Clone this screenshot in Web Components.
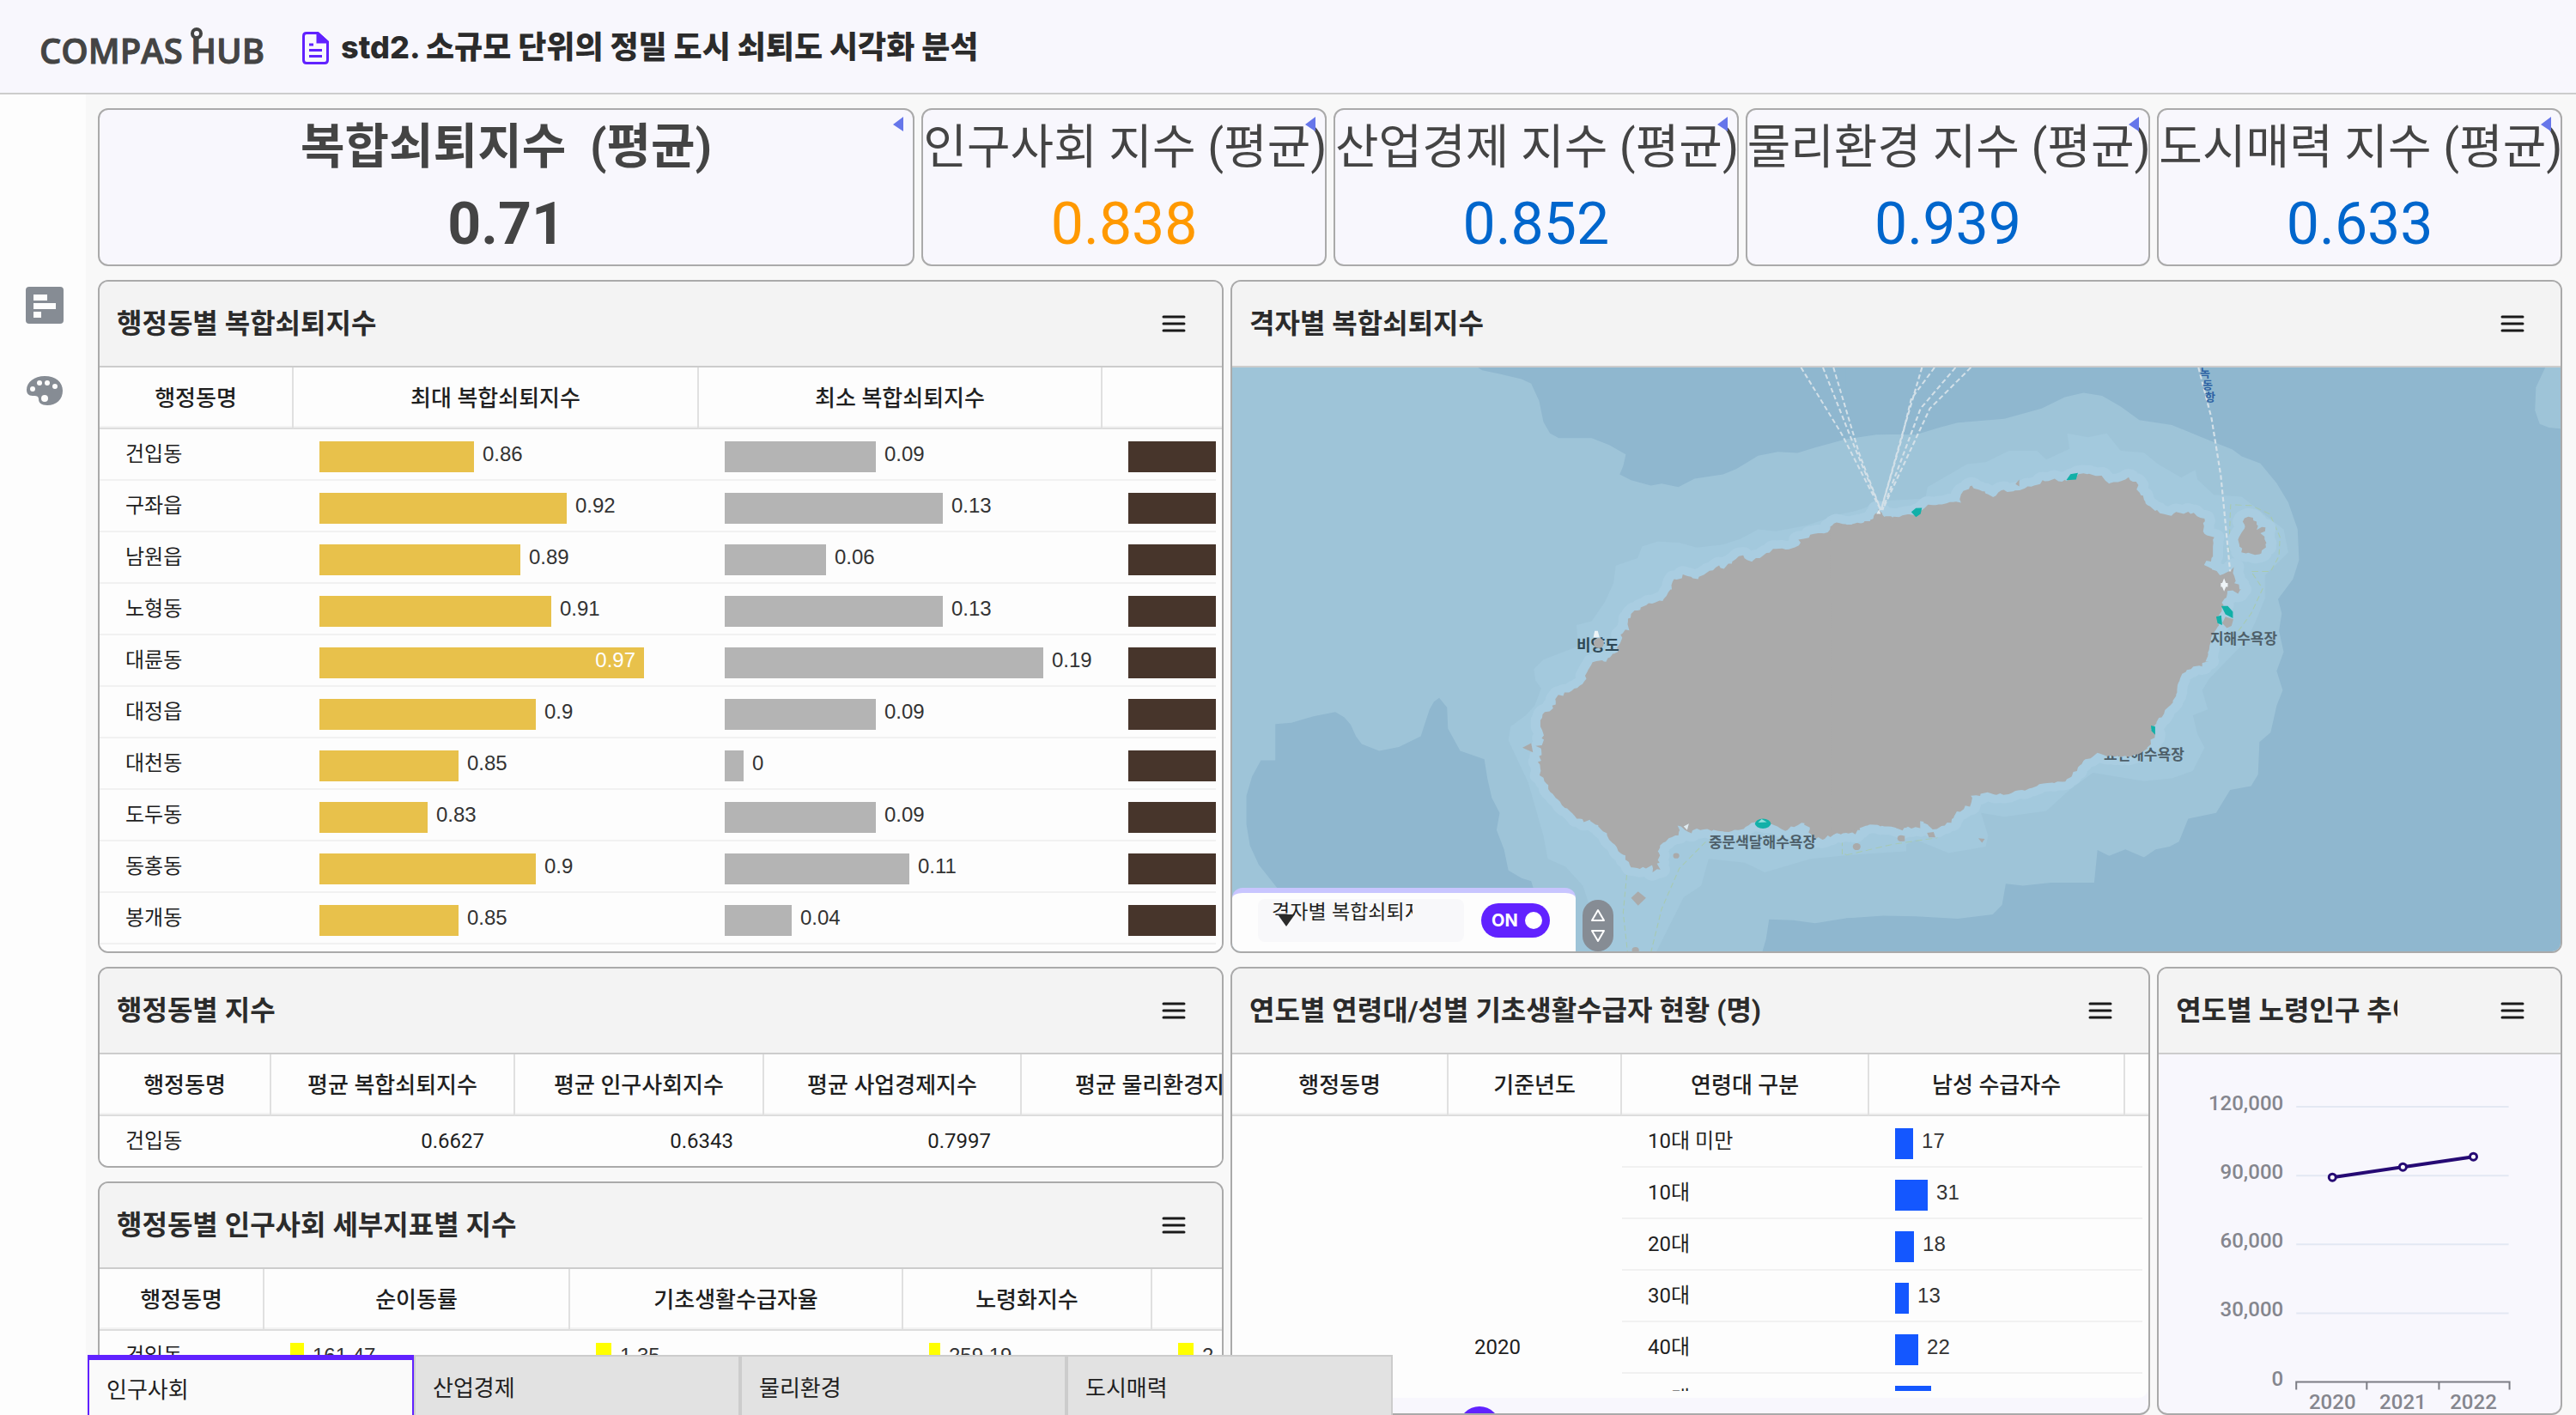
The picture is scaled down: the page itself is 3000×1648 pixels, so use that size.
<!DOCTYPE html>
<html lang="ko">
<head>
<meta charset="utf-8">
<title>COMPAS HUB</title>
<style>
  html, body {
    margin: 0;
    height: 100%;
    overflow: hidden;
  }
  body {
    font-family: Roboto, "Noto Sans CJK KR", sans-serif;
    font-size: 24px;
    color: #1f1f1f;
    background: #f8f8f8;
  }
</style>
</head>
<body>
<hub-app></hub-app>

<template id="tpl-app">
  <style>
    :host { display: flex; flex-direction: column; height: 100vh; }
    .body { flex: 1; min-height: 0; display: flex; }
    main {
      flex: 1;
      min-width: 0;
      display: grid;
      grid-template-columns: repeat(24, minmax(0, 1fr));
      grid-template-rows: auto auto minmax(0, 1fr);
      gap: 16px 8px;
      padding: 16px 16px 0 14px;
      overflow: hidden;
    }
    .w4 { grid-column: span 4; }
    .w8 { grid-column: span 8; }
    .w9 { grid-column: span 9; }
    .w11 { grid-column: span 11; }
    .w13 { grid-column: span 13; }
    .stack { display: flex; flex-direction: column; gap: 16px; min-height: 0; }
    .stack .grow { flex: 1; min-height: 0; }
    .pad { padding-bottom: 8px; background: #fdfdfd; }
    #welfare { height: 400px; border-bottom: 8px solid #fdfdfd; border-radius: 0 0 12px 12px; }
    .pager { padding: 10px 0 0 264px; }
    .pager button {
      width: 48px; height: 48px; border: 0; border-radius: 50%;
      background: #6122ff; color: #fff; font: inherit;
    }
    tab-bar { position: fixed; left: 102px; bottom: 0; }
  </style>
  <hub-header>std2. 소규모 단위의 정밀 도시 쇠퇴도 시각화 분석</hub-header>
  <div class="body">
    <side-nav></side-nav>
    <main>
      <kpi-card class="w8" main label="복합쇠퇴지수  (평균)" value="0.71"></kpi-card>
      <kpi-card class="w4" label="인구사회 지수 (평균)" value="0.838" style="--value: #ff9900"></kpi-card>
      <kpi-card class="w4" label="산업경제 지수 (평균)" value="0.852"></kpi-card>
      <kpi-card class="w4" label="물리환경 지수 (평균)" value="0.939"></kpi-card>
      <kpi-card class="w4" label="도시매력 지수 (평균)" value="0.633"></kpi-card>

      <dash-panel class="w11" label="행정동별 복합쇠퇴지수"><div class="pad"><data-grid id="decline"></data-grid></div></dash-panel>
      <dash-panel class="w13" label="격자별 복합쇠퇴지수"><jeju-map></jeju-map></dash-panel>

      <div class="w11 stack">
        <dash-panel label="행정동별 지수"><data-grid id="index"></data-grid></dash-panel>
        <dash-panel class="grow" label="행정동별 인구사회 세부지표별 지수"><data-grid id="social"></data-grid></dash-panel>
      </div>
      <dash-panel class="w9" label="연도별 연령대/성별 기초생활수급자 현황 (명)">
        <data-grid id="welfare"></data-grid>
        <nav class="pager"><button type="button" aria-label="첫 페이지"></button></nav>
      </dash-panel>
      <dash-panel class="w4" label="연도별 노령인구 추이"><line-chart></line-chart></dash-panel>
    </main>
  </div>
  <tab-bar></tab-bar>
</template>

<template id="tpl-header">
  <style>
    :host {
      display: flex; align-items: center; box-sizing: border-box;
      height: 110px; padding-left: 46px;
      background: #f8f7fd; border-bottom: 2px solid #ccc;
    }
    a { display: flex; }
    .logo { font: 600 40px "Open Sans", sans-serif; fill: #444; stroke: #444; stroke-width: 1px; }
    .doc { margin: 4px 14px 0 42px; }
    h1 {
      margin: 0; padding-top: 2px; font: 800 36px/52px Inter, "Noto Sans CJK KR", sans-serif;
      color: #2b2b2b; white-space: nowrap;
    }
  </style>
  <a href="#" aria-label="COMPAS HUB">
    <svg width="264" height="68" viewBox="0 0 264 68">
      <text class="logo" x="0" y="54">COMPAS</text>
      <text class="logo" x="176" y="54">HUB</text>
      <circle cx="183" cy="19" r="5" fill="none" stroke="#444" stroke-width="4"/>
      <path d="M183 24V40" stroke="#444" stroke-width="5"/>
    </svg>
  </a>
  <svg class="doc" width="31" height="38" viewBox="0 0 31 38" fill="none" stroke="#6122ff" stroke-width="3">
    <path d="M5 1.500H18L29.500 12V33Q29.500 36.500 26 36.500H5Q1.500 36.500 1.500 33V5Q1.500 1.500 5 1.500Z"/>
    <path d="M18 1.500V12H29.500Z" fill="#6122ff"/>
    <path d="M8 15H13M8 21.500H23M8 28.500H23"/>
  </svg>
  <h1><slot></slot></h1>
</template>

<template id="tpl-side">
  <style>
    :host {
      display: flex; flex-direction: column; align-items: center; gap: 60px;
      box-sizing: border-box; width: 100px; padding: 224px 0 0 4px; background: #fdfdfd;
    }
    button { display: flex; padding: 0; border: 0; background: none; }
  </style>
  <button type="button" aria-label="대시보드">
    <svg width="44" height="44" viewBox="0 0 44 44">
      <rect width="44" height="43" rx="4" fill="#868c94"/>
      <path d="M9 9H25V16H9ZM9 19H35V26H9ZM9 29H18V36H9Z" fill="#fdfdfd"/>
    </svg>
  </button>
  <button type="button" aria-label="테마">
    <svg width="44" height="34" viewBox="0 0 44 34">
      <path d="M22 0C35 0 43 7 43 17C43 27 36 34 25 34C18 34 15 31 15 27C15 23 12 23 8 23C3 23 1 20 1 16C1 7 10 0 22 0Z" fill="#868c94"/>
      <g fill="#fdfdfd"><circle cx="8" cy="15" r="3"/><circle cx="16" cy="8" r="3"/><circle cx="25" cy="8" r="3"/><circle cx="34" cy="12" r="3"/><circle cx="22" cy="26" r="4"/></g>
    </svg>
  </button>
</template>

<template id="tpl-kpi">
  <style>
    :host {
      display: block; position: relative; box-sizing: border-box; overflow: hidden;
      border: 2px solid #aaa; border-radius: 12px; background: #f8f7fd;
      text-align: center; color: #444;
    }
    .label { font-size: 55px; line-height: 86px; white-space: pre; }
    .value { font-size: 68px; line-height: 94px; color: var(--value, #0066cc); }
    :host([main]) { font-weight: 700; --value: #444; }
    :host([main]) .label { font-size: 56px; }
    svg { position: absolute; top: 8px; right: 11px; }
  </style>
  <div class="label"></div>
  <div class="value"></div>
  <svg width="12" height="17" viewBox="0 0 12 17"><path d="M12 0V17L0 9Z" fill="#6676ea"/></svg>
</template>

<template id="tpl-panel">
  <style>
    :host {
      display: flex; flex-direction: column; box-sizing: border-box; overflow: hidden;
      border: 2px solid #aaa; border-radius: 12px; background: #f8f7fd;
    }
    header {
      display: flex; align-items: center; flex: none; height: 98px;
      padding: 0 42px 0 20px; background: #f3f3f3; border-bottom: 2px solid #ccc;
    }
    h2 {
      flex: 1; min-width: 0; margin: 0 120px 0 0; overflow: hidden;
      font-size: 32px; line-height: 48px; font-weight: 700; color: #2b2b2b; white-space: nowrap;
    }
    button { display: flex; padding: 0; border: 0; background: none; }
    .content { flex: 1; min-height: 0; }
  </style>
  <header>
    <h2></h2>
    <button type="button" aria-label="메뉴">
      <svg width="28" height="20" viewBox="0 0 28 20"><path d="M2 2H26M2 10H26M2 18H26" stroke="#1a1a1a" stroke-width="3" stroke-linecap="round"/></svg>
    </button>
  </header>
  <div class="content"><slot></slot></div>
</template>

<template id="tpl-grid">
  <style>
    :host { display: block; position: relative; box-sizing: border-box; overflow: hidden; background: #fdfdfd; }
    /* scroll gutter beside the rows */
    :host::after {
      content: ""; position: absolute; top: 72px; right: 0; bottom: 0; width: 7px; background: #fdfdfd;
    }
    table { table-layout: fixed; border-collapse: separate; border-spacing: 0; min-width: 100%; }
    th {
      box-sizing: border-box; height: 72px; padding: 2px 0 0; overflow: hidden;
      border-right: 2px solid #e0e0e0; border-bottom: 2px solid #ddd; box-shadow: inset 0 -2px #f3f3f3;
      font-size: 26px; line-height: 36px; font-weight: 500; text-align: center; white-space: nowrap;
    }
    th:last-child { border-right: 0; }
    td {
      box-sizing: border-box; height: 60px; padding: 0 0 0 30px; border-bottom: 2px solid #f1f1f1;
      line-height: 58px; white-space: nowrap; overflow: hidden;
    }
    td.num { padding: 0 36px 0 0; text-align: right; }
    :host([single]) td { height: 58px; border-bottom: 0; }
    .cell { display: flex; gap: 10px; height: 58px; font-family: "Liberation Sans", sans-serif; color: #333; }
    .bar { flex: none; height: 36px; margin-top: 14px; }
    .bar.in { box-sizing: border-box; padding-right: 10px; line-height: 30px; text-align: right; color: #fff; }
  </style>
  <table><colgroup></colgroup><thead><tr></tr></thead><tbody></tbody></table>
</template>

<template id="tpl-map">
  <style>
    :host { display: flex; position: relative; height: 100%; background: #9ec4d8; overflow: hidden; }
    .map { position: absolute; width: 100%; height: 100%; }
    .map text { font-family: "Noto Sans CJK KR", sans-serif; }
    .tools { position: relative; display: flex; align-items: flex-end; gap: 8px; margin-top: auto; }
    .layer {
      display: flex; align-items: center; gap: 20px; box-sizing: border-box;
      width: 400px; height: 74px; padding: 0 30px 4px;
      border-top: 6px solid #c8c5ff; border-radius: 12px 12px 0 0; background: #fdfdfd;
    }
    .pick {
      display: flex; flex-direction: column; box-sizing: border-box;
      width: 240px; height: 50px; padding: 0 16px; border-radius: 8px; background: #f8f8fa;
    }
    .pick svg { flex: none; margin: -12px 0 0 6px; position: relative; }
    select {
      appearance: none; flex: none; width: 164px; height: 34px; margin-top: -4px; padding: 0; border: 0; overflow: hidden;
      background: none; font: 23px "Noto Sans CJK KR", sans-serif; color: #1f1f1f;
    }
    .toggle {
      display: flex; align-items: center; box-sizing: border-box; gap: 8px;
      width: 80px; height: 40px; padding: 0 8px 0 12px; border-radius: 20px; background: #6122ff;
      font: 700 20px/24px Inter, sans-serif; color: #fff;
    }
    .toggle input { appearance: none; width: 20px; height: 20px; margin: 0; flex: none; border-radius: 50%; background: #fff; }
    .zoom {
      display: flex; flex-direction: column; justify-content: space-around; align-items: center; box-sizing: border-box;
      width: 36px; height: 60px; padding: 6px 0; border-radius: 18px; background: #868c94;
    }
    .zoom button { display: flex; padding: 0; border: 0; background: none; }
  </style>
  <svg class="map" viewBox="0 0 1547 680" preserveAspectRatio="xMidYMid slice">
    <g id="west" transform="translate(-15 -8) scale(.5102 .4464)">
      <g fill="#8fb7cf">
        <path d="M580 10L600 25 640 35 690 48 712 60 730 105 740 160 755 190 775 202H850L890 220 928 245 922 275 914 297 940 312 985 326 1010 321 1048 330 1085 308 1150 297 1180 283 1230 248 1275 238 1320 241 1360 227 1430 205 1500 193 1568 192V10Z"/>
        <path d="M128 948L165 945 215 928 265 917 285 930 300 950 312 980 325 1000 365 1018 410 1008 460 980 470 945 480 910 490 890 502 880 520 905 522 960 550 1018 605 1040 612 1090 622 1140 640 1180 633 1225 650 1275 660 1330 690 1350 712 1358 718 1380 600 1560H200L135 1380 90 1315 70 1265 62 1210V1135L75 1085 95 1043H128Z"/>
        <path d="M1255 1458L1310 1460 1360 1468 1430 1455 1568 1450V1560H1235L1248 1510Z"/>
      </g>
      <path fill="#a3c9dd" d="M1568 365L1500 368 1465 390 1420 400 1340 430 1270 445 1230 440 1190 465 1150 480 1090 488 1050 475 1000 472 965 485 955 515 905 535 900 580 880 630 850 680 815 690 820 745 740 780 718 805 722 835 735 855 720 900 700 925 665 955 660 990 680 1040 705 1100 720 1160 740 1240 750 1300 790 1320 830 1370 850 1440 870 1545 990 1560 1060 1400 1100 1370 1117 1300 1200 1310 1245 1335 1350 1300 1440 1290 1568 1280Z"/>
      <g fill="none" stroke="#a9cb9a" stroke-width="2" stroke-dasharray="14 8" opacity=".7">
        <path d="M932 1320L922 1440 932 1545M985 1545L1010 1430 1050 1325 1115 1250M1045 1240L1150 1222M1422 1230V1290L1568 1255"/>
      </g>
    </g>
    <g id="east" transform="translate(715 -8) scale(.5421 .4464)">
      <path fill="#8fb7cf" d="M0 205L60 192 150 193 200 175 240 162 340 152 420 125 470 95 510 84 550 92 590 120 630 155 700 168 780 208 830 232 850 250 890 268 925 320 950 370 970 440 973 520 960 570 928 622 936 660 930 705 940 760 925 810 938 860 925 900 912 970 888 995 885 1080 870 1110 825 1120 795 1180 735 1195 715 1255 695 1268 665 1275 640 1296 600 1275 565 1292 540 1277 533 1362 440 1362 380 1370 343 1365 335 1420 315 1445 240 1456 150 1450 80 1448 0 1455V1560H1560V10H0Z"/>
      <path fill="#9ec4d8" d="M1505 10L1482 70 1480 130 1490 165 1510 175 1560 180V10Z"/>
      <path fill="#a3c9dd" d="M0 400L90 365 170 360 175 330 210 305 260 270 300 265 350 235 410 235 430 258 480 230 475 190 520 200 560 190 590 235 640 240 670 270 720 305 750 285 755 310 790 350 850 355 940 440 950 500 900 560 900 620 880 680 860 730 780 830 765 860 777 910 745 925 755 975 770 1010 745 1070 700 1090 640 1097 530 1075 480 1120 430 1175 340 1190 290 1180 305 1240 300 1268 220 1285 150 1250 100 1280 0 1290Z"/>
      <g fill="none" stroke="#a9cb9a" stroke-width="2" stroke-dasharray="14 8" opacity=".7">
        <path d="M822 520L826 376 870 378 910 400 932 460 930 510 912 550 870 550 895 595 870 660 840 710M0 1290L100 1262 195 1245 205 1215"/>
      </g>
    </g>
    <g id="coast" fill="none" stroke="#a9cde1" stroke-width="44" stroke-linejoin="round"></g>
    <text x="1015" y="457" font-size="17" font-weight="700" fill="#4e5f69">표선해수욕장</text>
    <g id="land" fill="#aaa"></g>
    <g transform="translate(-15 -8) scale(.5102 .4464)">
      <g fill="#aaa">
        <path d="M692 1010L712 998 716 1022ZM722 1005L742 1003 740 1014Z"/>
        <path d="M956 1385L974 1402 956 1422 940 1402Z"/>
        <circle cx="1043" cy="1292" r="7"/><circle cx="1455" cy="1268" r="9"/><circle cx="950" cy="1538" r="8"/><circle cx="1556" cy="1246" r="8"/>
      </g>
      <ellipse cx="1241" cy="1208" rx="18" ry="13" fill="#12b0a8"/>
      <path d="M1230 1205L1238 1196 1250 1204Z" fill="#8fe0dc"/>
      <path d="M857 705H864L868 722H854Z" fill="#eef4f7"/>
      <path d="M1060 1215L1072 1208 1068 1225ZM1500 400L1506 388 1510 400Z" fill="#dfeaf0"/>
      <g fill="none" stroke="#d3e0e8" stroke-width="4" stroke-dasharray="12 7">
        <path d="M1328 18L1420 190 1510 390M1378 18L1450 225 1510 390M1402 18L1460 240 1510 390"/>
      </g>
    </g>
    <g transform="translate(715 -8) scale(.5421 .4464)">
      <g fill="#12b0a8">
        <path d="M140 395L150 385 163 384 160 400 150 408ZM473 312L482 296 498 293 494 310ZM806 640L820 640 831 655V672L815 662ZM795 668L806 665 808 690 798 685ZM655 952L664 955V976L656 966Z"/>
      </g>
      <path fill="#aaa" d="M815 668L832 675 828 692 818 698 808 685ZM115 1240H126V1254H115ZM174 1232L188 1230 192 1244 178 1244ZM284 1246L298 1248 292 1258ZM364 322L372 310V328Z"/>
      <path d="M812 568L816 580H820V590H816L812 602 808 590H805V580H808Z" fill="#eef4f7"/>
      <g fill="none" stroke="#d3e0e8" stroke-width="4" stroke-dasharray="12 7">
        <path d="M163 18L120 195 75 390M190 18L140 100 118 210 75 390M235 18L160 125 78 390M268 18L180 125 78 390M757 18L785 150 805 300 825 550"/>
      </g>
    </g>
    <g font-size="13" font-weight="700" fill="#2d62a3">
      <text x="1127" y="11">녹</text><text x="1130" y="25">동</text><text x="1133" y="39">항</text>
    </g>
    <text x="401" y="330" font-size="18" font-weight="700" fill="#2f4855">비양도</text>
    <circle cx="427" cy="321" r="6" fill="#aaa"/>
    <text x="555" y="559" font-size="17" font-weight="700" fill="#4e5f69">중문색달해수욕장</text>
    <text x="1139" y="322" font-size="17" font-weight="700" fill="#4e5f69">지해수욕장</text>
  </svg>
  <div class="tools">
    <div class="layer">
      <div class="pick">
        <select aria-label="레이어"><option>격자별 복합쇠퇴지수</option></select>
        <svg width="22" height="14" viewBox="0 0 22 14"><path d="M1 0H21L11 14Z" fill="#2b2b2b"/></svg>
      </div>
      <label class="toggle">ON<input type="checkbox" checked></label>
    </div>
    <div class="zoom">
      <button type="button" aria-label="위로"><svg width="18" height="16" viewBox="0 0 18 16"><path d="M9 2L16 14H2Z" fill="none" stroke="#fff" stroke-width="2" stroke-linejoin="round"/></svg></button>
      <button type="button" aria-label="아래로"><svg width="18" height="16" viewBox="0 0 18 16"><path d="M9 14L16 2H2Z" fill="none" stroke="#fff" stroke-width="2" stroke-linejoin="round"/></svg></button>
    </div>
  </div>
</template>

<template id="tpl-tabs">
  <style>
    :host { display: flex; }
    button {
      box-sizing: border-box; width: 380px; height: 70px; padding: 0 20px;
      border: 2px solid #ccc; border-bottom: 0; background: #e2e2e2;
      font: inherit; font-size: 26px; text-align: left; color: #1f1f1f;
    }
    button[aria-selected="true"] { border-color: #6122ff; border-top-width: 6px; background: #fafafa; }
  </style>
</template>

<script>
class HubElement extends HTMLElement {
  constructor(templateId) {
    super();
    this.attachShadow({ mode: "open" });
    const template = document.getElementById(templateId);
    this.shadowRoot.appendChild(template.content.cloneNode(true));
  }

  $(selector) {
    return this.shadowRoot.querySelector(selector);
  }
}

class HubHeader extends HubElement {
  constructor() { super("tpl-header"); }
}

class SideNav extends HubElement {
  constructor() { super("tpl-side"); }
}

class KpiCard extends HubElement {
  constructor() { super("tpl-kpi"); }

  connectedCallback() {
    this.$(".label").textContent = this.getAttribute("label");
    this.$(".value").textContent = this.getAttribute("value");
  }
}

class DashPanel extends HubElement {
  constructor() { super("tpl-panel"); }

  connectedCallback() {
    this.$("h2").textContent = this.getAttribute("label");
  }
}

// Cells: string = text, {n} = right aligned number, {bar, text, color, inside} = bar
class DataGrid extends HubElement {
  constructor() { super("tpl-grid"); }

  set data({ columns, rows }) {
    let total = 0;
    let hasAuto = false;
    columns.forEach(([label, width]) => {
      const col = document.createElement("col");
      if (width) {
        col.style.width = `${width}px`;
        total += width;
      } else {
        hasAuto = true;
      }
      this.$("colgroup").appendChild(col);
      const th = document.createElement("th");
      th.scope = "col";
      th.textContent = label;
      this.$("thead tr").appendChild(th);
    });
    this.$("table").style.width = hasAuto ? "100%" : `${total}px`;

    rows.forEach((cells) => {
      const tr = this.$("tbody").insertRow();
      cells.forEach((cell) => this.addCell(tr, cell));
    });
  }

  addCell(tr, cell) {
    const td = tr.insertCell();
    if (typeof cell === "string") {
      td.textContent = cell;
    } else if (cell.n) {
      td.className = "num";
      td.textContent = cell.n;
    } else if (cell.span) {
      td.rowSpan = cell.span;
      td.textContent = cell.text;
    } else {
      const wrap = document.createElement("div");
      wrap.className = "cell";
      const bar = document.createElement("div");
      bar.className = cell.inside ? "bar in" : "bar";
      bar.style.width = cell.bar;
      bar.style.background = cell.color;
      wrap.appendChild(bar);
      if (cell.inside) {
        bar.textContent = cell.text;
      } else if (cell.text) {
        const text = document.createElement("span");
        text.textContent = cell.text;
        wrap.appendChild(text);
      }
      td.appendChild(wrap);
    }
  }
}

const LAND = [
  ["translate(-15 -8) scale(.5102 .4464)", "1600 405 1545 418 1530 404 1516 408 1510 395 1504 388 1500 402 1490 412 1470 425 1430 430 1410 422 1395 432 1388 448 1350 455 1325 470 1322 485 1290 490 1260 497 1235 512 1215 522 1195 507 1175 522 1155 540 1130 537 1110 555 1090 570 1060 560 1035 572 1030 600 1010 628 990 632 965 642 938 660 935 700 918 715 912 750 885 785 862 785 838 810 830 845 795 862 768 880 760 910 742 915 730 940 738 975 737 1010 730 1050 732 1080 750 1110 775 1155 820 1197 850 1203 885 1235 905 1270 930 1300 940 1325 970 1325 985 1320 990 1332 1003 1330 1003 1270 1010 1255 1045 1238 1050 1215 1075 1230 1090 1222 1170 1230 1210 1215 1225 1205 1260 1210 1290 1225 1325 1208 1345 1215 1348 1238 1375 1250 1400 1235 1450 1232 1470 1210 1600 1220"],
  ["translate(715 -8) scale(.5421 .4464)", "-30 430 45 425 60 410 70 392 76 405 90 412 130 405 160 395 175 378 245 368 250 350 270 325 290 338 315 358 335 335 350 340 400 328 430 312 475 312 500 295 540 298 568 322 605 308 625 318 630 350 650 380 690 405 720 395 750 400 772 420 768 450 790 460 785 515 770 530 800 558 818 552 830 540 835 580 853 600 840 605 825 598 808 630 800 690 783 720 775 760 775 788 735 808 712 840 705 885 680 930 655 960 662 985 640 1020 590 1035 535 1025 510 1045 490 1075 465 1102 440 1100 380 1122 330 1132 300 1130 270 1135 265 1160 230 1185 225 1205 185 1222 165 1200 130 1205 122 1225 100 1212 40 1212 20 1228 -30 1238"],
  ["translate(715 -8) scale(.5421 .4464)", "860 408 872 410 880 420 883 440 900 435 893 450 902 480 893 505 850 502 842 470 855 440 852 420"]
];

// Breaks every shore segment into small steps, the way the grid cells do
function roughen(numbers) {
  const n = numbers.split(" ").map(Number);
  const out = [];
  let seed = 7;
  const rand = () => {
    seed = (seed * 16807) % 2147483647;
    return seed / 2147483647 - 0.5;
  };
  for (let i = 0; i < n.length - 2; i += 2) {
    const [x1, y1, x2, y2] = n.slice(i, i + 4);
    const length = Math.hypot(x2 - x1, y2 - y1);
    const steps = Math.max(1, Math.round(length / 8));
    for (let s = 0; s < steps; s++) {
      const t = s / steps;
      out.push([x1 + (x2 - x1) * t + rand() * 8, y1 + (y2 - y1) * t + rand() * 8]);
    }
  }
  out.push(n.slice(-2));
  return out.map((p) => p.map(Math.round).join(" ")).join("L");
}

class JejuMap extends HubElement {
  constructor() {
    super("tpl-map");
    LAND.forEach(([transform, points]) => {
      const d = `M${roughen(points)}Z`;
      ["#coast", "#land"].forEach((id) => {
        const path = document.createElementNS("http://www.w3.org/2000/svg", "path");
        path.setAttribute("transform", transform);
        path.setAttribute("d", d);
        this.$(id).appendChild(path);
      });
    });
  }
}

class LineChart extends HTMLElement {
  constructor() {
    super();
    this.attachShadow({ mode: "open" });
    const ticks = ["120,000", "90,000", "60,000", "30,000", "0"];
    const years = ["2020", "2021", "2022"];
    const points = [[202, 143], [284, 131], [366, 119]];
    this.shadowRoot.innerHTML = `
    <style>
      :host { display: block; }
      svg { display: block; width: 100%; }
      text { font: 500 24px Roboto, sans-serif; fill: #85868e; }
    </style>
    <svg viewBox="0 0 467 440" role="img" aria-label="노령인구">
      ${ticks.map((t, i) => `
        <text x="145" y="${65 + i * 80}" text-anchor="end">${t}</text>
        ${i < 4 ? `<path d="M160 ${61 + i * 80}H407" stroke="#e3e8f3" stroke-width="2"/>` : ""}
      `).join("")}
      <path d="M160 390V381H408V390M242 381V390M326 381V390" fill="none" stroke="#7c7d85" stroke-width="2"/>
      ${years.map((y, i) => `<text x="${202 + i * 82}" y="412" text-anchor="middle">${y}</text>`).join("")}
      <polyline points="${points.join(" ")}" fill="none" stroke="#260a74" stroke-width="4"/>
      ${points.map(([x, y]) => `<circle cx="${x}" cy="${y}" r="4" fill="#fff" stroke="#260a74" stroke-width="3"/>`).join("")}
    </svg>`;
  }
}

class TabBar extends HubElement {
  constructor() {
    super("tpl-tabs");
    ["인구사회", "산업경제", "물리환경", "도시매력"].forEach((name, i) => {
      const button = document.createElement("button");
      button.type = "button";
      button.setAttribute("role", "tab");
      button.setAttribute("aria-selected", String(i === 0));
      button.textContent = name;
      button.addEventListener("click", () => this.select(button));
      this.shadowRoot.appendChild(button);
    });
  }

  connectedCallback() {
    this.setAttribute("role", "tablist");
  }

  select(active) {
    this.shadowRoot.querySelectorAll("button").forEach((button) => {
      button.setAttribute("aria-selected", String(button === active));
    });
  }
}

const bar = (width, text, color, inside) => ({ bar: `${width}px`, text, color, inside });

const DECLINE = [
  ["건입동", 180, "0.86", 176, "0.09"],
  ["구좌읍", 288, "0.92", 254, "0.13"],
  ["남원읍", 234, "0.89", 118, "0.06"],
  ["노형동", 270, "0.91", 254, "0.13"],
  ["대륜동", 378, "0.97", 371, "0.19"],
  ["대정읍", 252, "0.9", 176, "0.09"],
  ["대천동", 162, "0.85", 22, "0"],
  ["도두동", 126, "0.83", 176, "0.09"],
  ["동홍동", 252, "0.9", 215, "0.11"],
  ["봉개동", 162, "0.85", 78, "0.04"]
];

const WELFARE = [
  ["10대 미만", 21, "17"],
  ["10대", 38, "31"],
  ["20대", 22, "18"],
  ["30대", 16, "13"],
  ["40대", 27, "22"],
  ["50대", 42, "34"],
  ["", 0, ""],
  ["", 0, ""],
  ["", 0, ""]
];

class HubApp extends HubElement {
  constructor() { super("tpl-app"); }

  connectedCallback() {
    customElements.upgrade(this.shadowRoot);

    this.$("#decline").data = {
      columns: [["행정동명", 226], ["최대 복합쇠퇴지수", 472], ["최소 복합쇠퇴지수", 470], ["", 0]],
      rows: DECLINE.map(([name, w1, t1, w2, t2]) => [
        name,
        bar(w1, t1, "#e8c14b", t1 === "0.97"),
        bar(w2, t2, "#b4b4b4"),
        { bar: "100%", text: "", color: "#47352b" }
      ])
    };

    this.$("#index").setAttribute("single", "");
    this.$("#index").data = {
      columns: [["행정동명", 200], ["평균 복합쇠퇴지수", 284], ["평균 인구사회지수", 290], ["평균 사업경제지수", 300], ["평균 물리환경지수", 322]],
      rows: [["건입동", { n: "0.6627" }, { n: "0.6343" }, { n: "0.7997" }, ""]]
    };

    this.$("#social").data = {
      columns: [["행정동명", 192], ["순이동률", 356], ["기초생활수급자율", 388], ["노령화지수", 290], ["", 0]],
      rows: [["건입동", bar(16, "161.47", "#ff0"), bar(18, "1.35", "#ff0"), bar(13, "259.19", "#ff0"), bar(18, "2", "#ff0")]]
    };

    this.$("#welfare").data = {
      columns: [["행정동명", 252], ["기준년도", 202], ["연령대 구분", 288], ["남성 수급자수", 298], ["", 0]],
      rows: WELFARE.map(([age, width, count], i) => {
        const cells = [age, bar(width, count, "#1457ff"), ""];
        return i ? cells : [{ span: 9, text: "" }, { span: 9, text: "2020" }, ...cells];
      })
    };
  }
}

customElements.define("hub-header", HubHeader);
customElements.define("side-nav", SideNav);
customElements.define("kpi-card", KpiCard);
customElements.define("dash-panel", DashPanel);
customElements.define("data-grid", DataGrid);
customElements.define("jeju-map", JejuMap);
customElements.define("line-chart", LineChart);
customElements.define("tab-bar", TabBar);
customElements.define("hub-app", HubApp);
</script>
</body>
</html>
